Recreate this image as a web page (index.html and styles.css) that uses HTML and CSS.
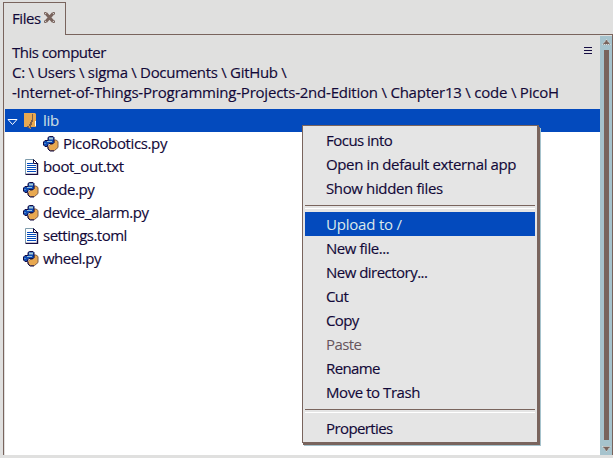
FILE: index.html
```
<!DOCTYPE html>
<html lang="en">
<head>
<meta charset="utf-8">
<title>Files</title>
<link rel="stylesheet" href="styles.css">
</head>
<body>
<svg width="0" height="0" class="defs" aria-hidden="true">
  <symbol id="python" viewBox="0 0 16 16">
    <path d="M7.500 14.500h4l3.500-3v-6l-2-1.500h-2v3l-2 1.500h-2l-2 2v2z" fill="#e8a850" stroke="#80604c"/>
    <path d="M5 1.500 6.500.5h3.500l1 1v5l-1 1H6L4.500 9v1.500H2L.5 9V6l1.500-1.500h3z" fill="#0d4cb5" stroke="#160d43"/>
    <path d="M6 1.500h4v2H6z" fill="#a9c9d2"/><path d="M1.500 7.500h1M4 5.500h5" stroke="#9bc0da"/>
    <path d="M5 11v2l2 2h4" fill="none" stroke="#160d43"/>
  </symbol>
  <symbol id="doc" viewBox="0 0 14 16">
    <path d="M.5.5h8l4 4v11H.5z" fill="#fff"/>
    <path d="M.5 15V.5h8" fill="none" stroke="#7e9cac"/>
    <path d="M8.500.5v4h4M8.500.5l4 4" fill="none" stroke="#160d43"/>
    <path d="M12.500 4v11.500H.5" fill="none" stroke="#160d43" stroke-width="1.400"/>
    <path d="M2 4.500h6M2 6.500h9M2 8.500h9M2 10.500h9M2 12.500h9" stroke="#034abd" stroke-width="1.200"/>
  </symbol>
</svg>
<div class="app">
  <div class="tabs">
    <div class="tab"><span class="t-files">Files</span>
      <svg class="close" width="11" height="11" viewBox="0 0 11 11"><path d="M2 1.500 9 9.500M9 1.500 2 9.500" stroke="#79645d" stroke-width="3"/><path d="M.5 2.500v-2h2M8.500.5h2v2M.5 8.500v2h2M8.500 10.500h2v-2" fill="none" stroke="#79645d"/></svg>
    </div>
  </div>
  <div class="panel">
    <div class="main">
      <div class="path">
        <div class="path-top"><span class="t-computer">This computer</span>
          <svg width="8" height="7" viewBox="0 0 8 7"><path d="M0 .5h8M0 3.500h8M0 6.500h8" stroke="#160d43"/></svg>
        </div>
        <div><span class="t-users">C: \ Users \ sigma \ Documents \ GitHub \</span></div>
        <div><span class="t-repo">-Internet-of-Things-Programming-Projects-2nd-Edition \ Chapter13 \ code \ PicoH</span></div>
      </div>
      <div class="tree">
        <div class="row folder">
          <svg class="arrow" width="11" height="7" viewBox="0 0 11 7"><path d="M1 .5h9L5.500 5.500z" fill="none" stroke="#fff"/></svg>
          <svg class="folder-icon" width="13" height="16" viewBox="0 0 13 16"><path d="M0 0h11l1 1v13H7v2L4 14H0z" fill="#e8a850"/><path d="M7 7h1V1h1v8H8v3H7v3H6v-2H5v-2h1V9h1zM3 13h2v1l1 2-3-2z" fill="#80604c"/><path d="M11 8h1v5h-1z" fill="#fff"/></svg>
          <span class="t-lib">lib</span>
        </div>
        <div class="row child"><svg class="py"><use href="#python"/></svg><span class="t-pico">PicoRobotics.py</span></div>
        <div class="row"><svg class="doc"><use href="#doc"/></svg><span class="t-boot">boot_out.txt</span></div>
        <div class="row"><svg class="py"><use href="#python"/></svg><span class="t-code">code.py</span></div>
        <div class="row"><svg class="py"><use href="#python"/></svg><span class="t-device">device_alarm.py</span></div>
        <div class="row"><svg class="doc"><use href="#doc"/></svg><span class="t-settings">settings.toml</span></div>
        <div class="row"><svg class="py"><use href="#python"/></svg><span class="t-wheel">wheel.py</span></div>
      </div>
    </div>
    <div class="scroll">
      <svg width="9" height="6" viewBox="0 0 9 6"><path d="M4.500.5 8.500 5.500H.5z" fill="#79645d" stroke="#e6e6e4" stroke-dasharray="1 1"/></svg>
      <div class="thumb"></div>
      <svg width="9" height="6" viewBox="0 0 9 6"><path d="M.5.5h8L4.500 5.500z" fill="#79645d" stroke="#e6e6e4" stroke-dasharray="1 1"/></svg>
    </div>
  </div>
  <div class="foot"></div>
</div>
<div class="menu">
  <div class="item"><span class="t-focus">Focus into</span></div>
  <div class="item"><span class="t-open">Open in default external app</span></div>
  <div class="item"><span class="t-show">Show hidden files</span></div>
  <div class="sep"></div>
  <div class="item active"><span class="t-upload">Upload to /</span></div>
  <div class="item"><span class="t-newfile">New file...</span></div>
  <div class="item"><span class="t-newdir">New directory...</span></div>
  <div class="item"><span class="t-cut">Cut</span></div>
  <div class="item"><span class="t-copy">Copy</span></div>
  <div class="item disabled"><span class="t-paste">Paste</span></div>
  <div class="item"><span class="t-rename">Rename</span></div>
  <div class="item"><span class="t-trash">Move to Trash</span></div>
  <div class="sep"></div>
  <div class="item"><span class="t-props">Properties</span></div>
</div>
</body>
</html>
```
FILE: styles.css
```
* { box-sizing: border-box; }
body { margin: 0; width: 613px; height: 458px; overflow: hidden; background: #e0e0df; color: #120938; font: 15px/20px "Open Sans", "Noto Sans", sans-serif; white-space: nowrap; letter-spacing: -.3px; -webkit-text-stroke: .15px; }
svg { display: block; flex: none; }
.defs { position: absolute; }
.app { height: 458px; padding: 2px 0 0 3px; display: flex; flex-direction: column; }
.tabs { height: 33px; flex: none; display: flex; }
.tabs::after { content: ""; flex: 1; border-bottom: 1px solid #79645d; }
.tab { width: 63px; border: 1px solid #79645d; border-bottom: 0; padding: 5px 0 0 8px; display: flex; }
.tab span { width: 32px; }
.close { margin-top: 4px; }
.panel { height: 420px; display: flex; border-left: 1px solid #79645d; border-right: 1px solid #79645d; }
.main { flex: 1; display: flex; flex-direction: column; padding-left: 1px; }
.path { height: 74px; flex: none; padding: 7px 8px 0 7px; }
.path-top { display: flex; justify-content: space-between; }
.path-top svg { margin-top: 5px; }
.tree { flex: 1; background: #fff; }
.row { height: 23px; display: flex; align-items: center; line-height: 23px; padding-left: 18px; }
.row.child { padding-left: 38px; }
.row.folder { background: #034abd; color: #c8dce2; padding-left: 2px; }
.py { width: 16px; height: 16px; margin-right: 4px; }
.doc { width: 14px; height: 16px; margin: 0 4px 0 2px; }
.arrow { margin: 3px 6px 0 0; }
.folder-icon { margin-right: 6px; }
.scroll { width: 12px; margin-top: 1px; padding: 3px 0; background: #a6c3cd; display: flex; flex-direction: column; align-items: center; }
.thumb { width: 5px; height: 391px; margin: 5px 0 6px; background: #79645d; }
.foot { flex: 1; }
.menu { position: absolute; left: 302px; top: 125px; width: 237px; height: 318px; padding: 2px 2px 0; background: #e5e5e5; border: 1px solid #79645d; border-right-width: 2px; box-shadow: 1px 2px 0 #79645d, 2px 3px 0 #a6c3cd; }
.item { height: 24px; line-height: 24px; padding-left: 21px; }
.active { background: #034abd; color: #dbe8ea; -webkit-text-stroke: 0; }
.disabled { color: #65545c; -webkit-text-stroke: 0; }
.sep { height: 12px; padding-top: 5px; }
.sep::before { content: ""; display: block; height: 2px; border-top: 1px solid #79645d; border-bottom: 1px solid #fff; }
.t-files { letter-spacing: -.45px; }
.t-computer { letter-spacing: -.53px; }
.t-repo { letter-spacing: -.22px; }
.t-pico, .t-boot, .t-open, .t-show { letter-spacing: -.37px; }
.t-device, .t-code, .t-newfile, .t-trash { letter-spacing: -.44px; }
.t-settings, .t-wheel, .t-focus, .t-newdir { letter-spacing: -.52px; }
.t-rename, .t-props, .t-paste, .t-copy, .t-cut { letter-spacing: -.6px; }
.t-upload { letter-spacing: -.2px; }
```
